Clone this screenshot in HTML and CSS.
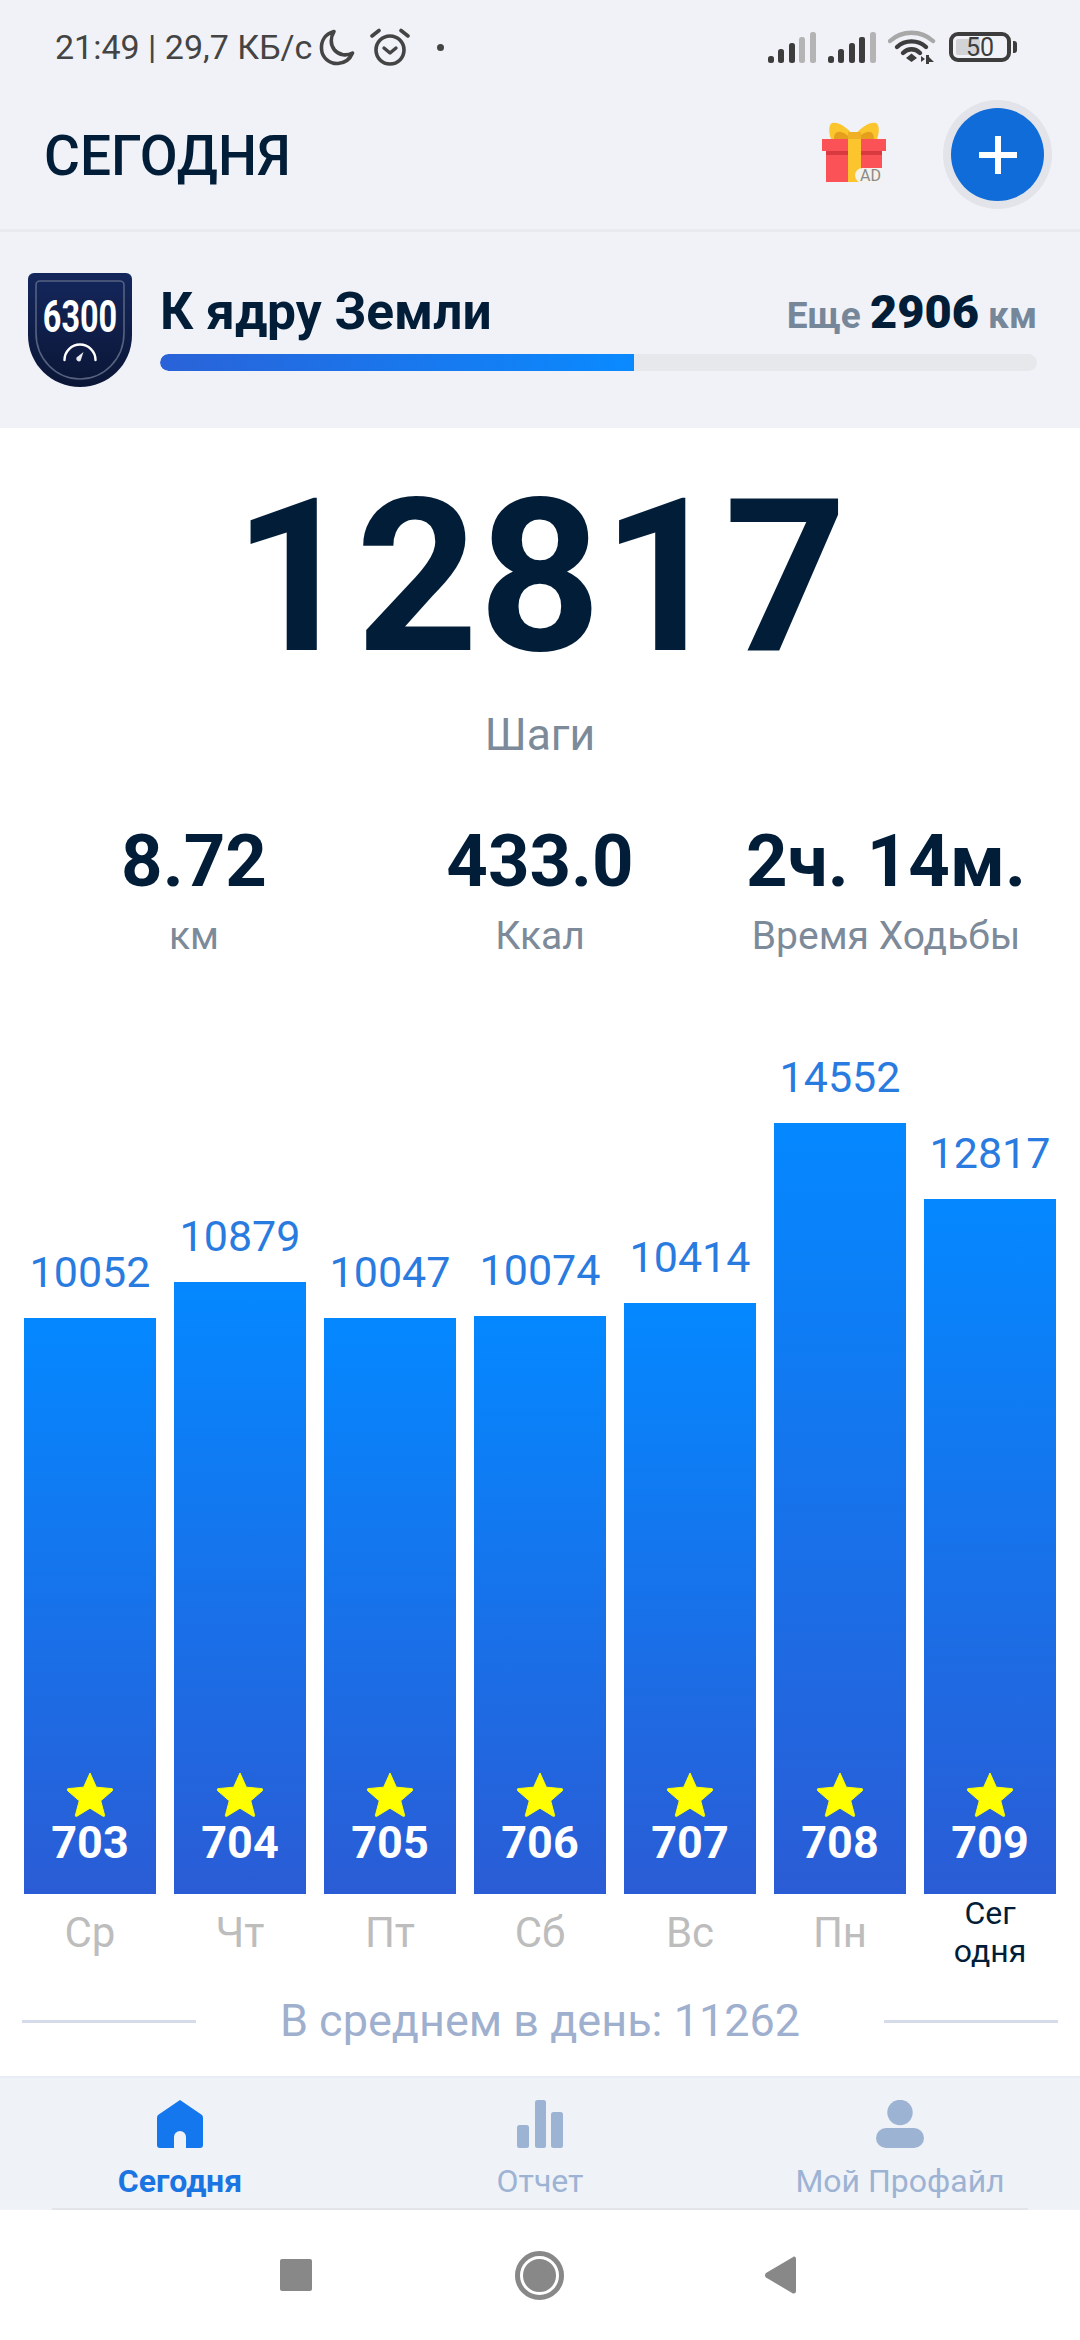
FILE: index.html
```html
<!DOCTYPE html>
<html lang="ru">
<head>
  <meta charset="UTF-8">
  <meta name="viewport" content="width=device-width, initial-scale=1.0">
  <title>Шаги</title>
  <link rel="stylesheet" href="styles.css">
</head>
<body>
  <div class="screen">
    <!-- Status bar -->
    <div class="status-bar">
      <div class="status-left">
        <span class="status-text">21:49 | 29,7 КБ/с</span>
        <svg class="icon-moon" width="36" height="37" viewBox="0 0 36 37"><path d="M15 2.5 C6 5 2 12 2.5 20 C3 29 11 35 19 34.5 C26 34 31 30 33.5 24 C28 27 20 26.5 15.5 21 C11 15.5 11.5 8 15 2.5 Z" fill="none" stroke="#444" stroke-width="3.6" stroke-linejoin="round"/></svg>
        <svg class="icon-alarm" width="40" height="38" viewBox="0 0 40 38"><circle cx="20" cy="22" r="14" fill="none" stroke="#444" stroke-width="3.6"/><path d="M14 20 L20 25 L26 20" fill="none" stroke="#444" stroke-width="3.4" stroke-linecap="round" stroke-linejoin="round"/><path d="M2 8 L9 2.5 M38 8 L31 2.5" stroke="#444" stroke-width="3.6" stroke-linecap="round"/></svg>
        <span class="status-dot"></span>
      </div>
      <div class="status-right">
        <svg class="icon-signal" width="48" height="31" viewBox="0 0 48 31">
          <rect x="0" y="24" width="6" height="7" rx="2.5" fill="#3d3d3d"/>
          <rect x="10" y="17" width="6" height="14" rx="2.5" fill="#3d3d3d"/>
          <rect x="21" y="11" width="6" height="20" rx="2.5" fill="#3d3d3d"/>
          <rect x="31" y="5" width="6" height="26" rx="2.5" fill="#b4b4b4"/>
          <rect x="42" y="0" width="6" height="31" rx="2.5" fill="#b4b4b4"/>
        </svg>
        <svg class="icon-signal" width="48" height="31" viewBox="0 0 48 31">
          <rect x="0" y="24" width="6" height="7" rx="2.5" fill="#3d3d3d"/>
          <rect x="10" y="17" width="6" height="14" rx="2.5" fill="#3d3d3d"/>
          <rect x="21" y="11" width="6" height="20" rx="2.5" fill="#3d3d3d"/>
          <rect x="31" y="5" width="6" height="26" rx="2" fill="#3d3d3d"/>
          <rect x="42" y="0" width="6" height="31" rx="2.5" fill="#b4b4b4"/>
        </svg>
        <svg class="icon-wifi" width="48" height="35" viewBox="0 0 48 35">
          <path d="M2 11 C14 0 33 0 45 11" fill="none" stroke="#a8a8a8" stroke-width="4.4" stroke-linecap="round"/>
          <path d="M9 17 C17 9.5 30 9.5 38 17" fill="none" stroke="#3d3d3d" stroke-width="4.4" stroke-linecap="round"/>
          <path d="M15 23 C20 18 27 18 32 23" fill="none" stroke="#3d3d3d" stroke-width="4.4" stroke-linecap="round"/>
          <path d="M18 28 L23.500 23.500 L29 28 L23.500 32 Z" fill="#3d3d3d"/>
          <path d="M33 32 L33 26 L37 29 Z M38 25 L38 34 L41 34 L41 25 Z M41 27 L46 32 L41 32 Z" fill="#3d3d3d"/>
        </svg>
        <div class="battery">
          <div class="battery-body">
            <span class="battery-level"></span>
            <span class="battery-text">50</span>
          </div>
          <span class="battery-tip"></span>
        </div>
      </div>
    </div>

    <!-- Header -->
    <header class="top-bar">
      <h1 class="page-title">СЕГОДНЯ</h1>
      <div class="top-actions">
        <div class="gift">
          <svg width="64" height="62" viewBox="0 0 64 62">
            <path d="M32 14 C26 6 16 -1 10 1 C6 3 7 12 9 17 L55 17 C57 12 58 3 54 1 C48 -1 38 6 32 14 Z" fill="#fbc52e"/>
            <path d="M12 17 C12 12 14 9 19 10 C23 11 26 13 28 17 Z M52 17 C52 12 50 9 45 10 C41 11 38 13 36 17 Z" fill="#e59f1c"/>
            <rect x="26" y="10" width="13" height="8" fill="#f0b024"/>
            <rect x="4" y="28" width="56" height="32" fill="#fb5257"/>
            <rect x="4" y="29" width="56" height="4" fill="#d93a40"/>
            <rect x="0" y="17" width="64" height="12" fill="#fb5257"/>
            <rect x="26" y="17" width="13" height="43" fill="#fcc42d"/>
          </svg>
          <span class="gift-ad">AD</span>
        </div>
        <button class="add-button">
          <svg width="40" height="40" viewBox="0 0 40 40"><path d="M20 1 V39 M1 20 H39" stroke="#fff" stroke-width="6"/></svg>
        </button>
      </div>
    </header>

    <!-- Distance goal -->
    <section class="goal">
      <div class="goal-badge">
        <svg width="104" height="114" viewBox="0 0 104 114">
          <defs>
            <linearGradient id="badgeFill" x1="0" y1="0" x2="0" y2="1">
              <stop offset="0" stop-color="#14275c"/>
              <stop offset="1" stop-color="#0b1636"/>
            </linearGradient>
          </defs>
          <path d="M6 0 H98 A6 6 0 0 1 104 6 V62 C104 92 80 114 52 114 C24 114 0 92 0 62 V6 A6 6 0 0 1 6 0 Z" fill="url(#badgeFill)"/>
          <path d="M12 8 H92 A4 4 0 0 1 96 12 V60 C96 86 76 106 52 106 C28 106 8 86 8 60 V12 A4 4 0 0 1 12 8 Z" fill="none" stroke="#55627f" stroke-width="1.6"/>
          <path d="M36.500 87 A15.500 15.500 0 0 1 67.500 87" fill="none" stroke="#fff" stroke-width="2.400" stroke-linecap="round"/>
          <path d="M55.500 79 L48.500 84.500 A2.800 2.800 0 0 0 52.500 88 Z" fill="#e8eaf0"/>
        </svg>
        <span class="badge-text">6300</span>
      </div>
      <div class="goal-body">
        <div class="goal-row">
          <span class="goal-title">К ядру Земли</span>
          <span class="goal-left">Еще <b>2906</b> км</span>
        </div>
        <div class="goal-track"><div class="goal-fill" style="width: 54%"></div></div>
      </div>
    </section>

    <!-- Today -->
    <main class="today">
      <div class="steps-count">12817</div>
      <div class="steps-label">Шаги</div>

      <div class="stats">
        <div class="stat"><div class="stat-value">8.72</div><div class="stat-label">км</div></div>
        <div class="stat"><div class="stat-value">433.0</div><div class="stat-label">Ккал</div></div>
        <div class="stat"><div class="stat-value">2ч. 14м.</div><div class="stat-label">Время Ходьбы</div></div>
      </div>

      <div class="chart">
        <div class="chart-col"><div class="chart-value">10052</div><div class="bar" style="height: 576px"><svg class="star" width="48" height="45" viewBox="0 0 48 46"><use href="#star"/></svg><span class="bar-num">703</span></div></div>
        <div class="chart-col"><div class="chart-value">10879</div><div class="bar" style="height: 612px"><svg class="star" width="48" height="45" viewBox="0 0 48 46"><use href="#star"/></svg><span class="bar-num">704</span></div></div>
        <div class="chart-col"><div class="chart-value">10047</div><div class="bar" style="height: 576px"><svg class="star" width="48" height="45" viewBox="0 0 48 46"><use href="#star"/></svg><span class="bar-num">705</span></div></div>
        <div class="chart-col"><div class="chart-value">10074</div><div class="bar" style="height: 578px"><svg class="star" width="48" height="45" viewBox="0 0 48 46"><use href="#star"/></svg><span class="bar-num">706</span></div></div>
        <div class="chart-col"><div class="chart-value">10414</div><div class="bar" style="height: 591px"><svg class="star" width="48" height="45" viewBox="0 0 48 46"><use href="#star"/></svg><span class="bar-num">707</span></div></div>
        <div class="chart-col"><div class="chart-value">14552</div><div class="bar" style="height: 771px"><svg class="star" width="48" height="45" viewBox="0 0 48 46"><use href="#star"/></svg><span class="bar-num">708</span></div></div>
        <div class="chart-col"><div class="chart-value">12817</div><div class="bar" style="height: 695px"><svg class="star" width="48" height="45" viewBox="0 0 48 46"><use href="#star"/></svg><span class="bar-num">709</span></div></div>
      </div>

      <div class="days">
        <span class="day">Ср</span>
        <span class="day">Чт</span>
        <span class="day">Пт</span>
        <span class="day">Сб</span>
        <span class="day">Вс</span>
        <span class="day">Пн</span>
        <span class="day day-today">Сег<br>одня</span>
      </div>

      <div class="average">
        <span class="average-line"></span>
        <span class="average-text">В среднем в день: 11262</span>
        <span class="average-line"></span>
      </div>
    </main>

    <!-- Tab bar -->
    <nav class="tabs">
      <div class="tab tab-active">
        <svg width="46" height="48" viewBox="0 0 46 48"><path d="M23 0 L45 15 Q46 16 46 18 V45 Q46 48 43 48 H29 V37 A6 6 0 0 0 17 37 V48 H3 Q0 48 0 45 V18 Q0 16 1 15 Z" fill="#1577ee"/></svg>
        <span>Сегодня</span>
      </div>
      <div class="tab">
        <svg width="46" height="48" viewBox="0 0 46 48"><rect x="0" y="25" width="12" height="23" rx="2.500" fill="#9db3d4"/><rect x="18" y="0" width="11" height="48" rx="2.500" fill="#9db3d4"/><rect x="34" y="12" width="12" height="36" rx="2.500" fill="#9db3d4"/></svg>
        <span>Отчет</span>
      </div>
      <div class="tab">
        <svg width="48" height="48" viewBox="0 0 48 48"><circle cx="24" cy="12.500" r="12.700" fill="#9db3d4"/><rect x="0" y="28" width="48" height="20" rx="10" fill="#9db3d4"/></svg>
        <span>Мой Профайл</span>
      </div>
    </nav>

    <!-- System navigation -->
    <div class="system-nav">
      <span class="nav-square"></span>
      <span class="nav-circle"></span>
      <svg width="33" height="38" viewBox="0 0 33 38"><path d="M30 0.500 Q32 0 32 3 V35 Q32 38 29 37.500 L2 21.500 Q0 19 2 17 Z" fill="#888"/></svg>
    </div>
  </div>

  <!-- Shared star shape -->
  <svg class="sprite" width="0" height="0">
    <symbol id="star" viewBox="0 0 48 46">
      <path d="M24 1 L30.500 15.500 L46.500 17 Q48 17.500 47 19 L35 29.500 L39 44.500 Q39 46 37 45 L24 37 L11 45 Q9 46 9 44.500 L13 29.500 L1 19 Q0 17.500 1.500 17 L17.500 15.500 Z" fill="#ffff00" stroke="#ffff00" stroke-width="1" stroke-linejoin="round"/>
    </symbol>
  </svg>
</body>
</html>
```
FILE: styles.css
```css
/* Global Styles */
body {
  margin: 0;
  font-family: 'Roboto', 'Noto Sans', sans-serif;
  background-color: #ffffff;
  color: #021d38;
}

.screen {
  width: 1080px;
  height: 2340px;
  display: flex;
  flex-direction: column;
  overflow: hidden;
}

.sprite {
  position: absolute;
}

/* Status Bar */
.status-bar {
  height: 80px;
  padding: 14px 63px 0 55px;
  box-sizing: border-box;
  background-color: #f0f2f7;
  display: flex;
  justify-content: space-between;
  align-items: center;
}

.status-left,
.status-right {
  display: flex;
  align-items: center;
}

.status-text {
  font-size: 34px;
  color: #444;
}

.icon-moon {
  margin-left: 7px;
}

.icon-alarm {
  margin-left: 15px;
}

.status-dot {
  width: 7px;
  height: 7px;
  margin-left: 27px;
  border-radius: 50%;
  background-color: #444;
}

.icon-signal {
  margin-right: 12px;
}

.icon-wifi {
  margin-right: 13px;
}

.battery {
  display: flex;
  align-items: center;
}

.battery-body {
  position: relative;
  width: 62px;
  height: 30px;
  box-sizing: border-box;
  border: 4px solid #3d3d3d;
  border-radius: 9px;
  display: flex;
  align-items: center;
  justify-content: center;
}

.battery-level {
  position: absolute;
  left: 3px;
  top: 3px;
  bottom: 3px;
  width: 24px;
  border-radius: 2px;
  background-color: #d2d3d6;
}

.battery-text {
  position: relative;
  font-size: 25px;
  color: #3d3d3d;
}

.battery-tip {
  width: 4px;
  height: 12px;
  margin-left: 2px;
  border-radius: 0 3px 3px 0;
  background-color: #3d3d3d;
}

/* Header */
.top-bar {
  height: 152px;
  padding: 0 36px 0 44px;
  box-sizing: border-box;
  background-color: #f0f2f7;
  border-bottom: 3px solid #e8eaef;
  display: flex;
  justify-content: space-between;
  align-items: center;
}

.page-title {
  margin: 3px 0 0;
  font-size: 55px;
  font-weight: 500;
  color: #021d38;
}

.top-actions {
  display: flex;
  align-items: center;
  gap: 65px;
}

.gift {
  position: relative;
  width: 64px;
  height: 62px;
  margin-top: -4px;
}

.gift svg {
  display: block;
}

.gift-ad {
  position: absolute;
  right: 4px;
  bottom: 1px;
  padding: 0 1px 0 5px;
  border-radius: 9px 0 0 9px;
  background-color: #f4f2ec;
  font-size: 16px;
  line-height: 15px;
  color: #8a8a8a;
}

.add-button {
  width: 93px;
  height: 93px;
  padding: 0;
  border: none;
  border-radius: 50%;
  background-color: #0f6cd8;
  box-shadow: 0 0 0 8px #e2e4e9;
  display: flex;
  align-items: center;
  justify-content: center;
}

/* Distance Goal */
.goal {
  height: 196px;
  padding: 41px 43px 0 28px;
  box-sizing: border-box;
  background-color: #f0f2f7;
  display: flex;
  align-items: flex-start;
  gap: 28px;
}

.goal-badge {
  position: relative;
  width: 104px;
  height: 114px;
  flex-shrink: 0;
}

.goal-badge svg {
  display: block;
}

/* narrow digits on the shield */
.badge-text {
  position: absolute;
  top: 28px;
  left: 0;
  width: 104px;
  font-size: 45px;
  line-height: 32px;
  font-weight: 700;
  text-align: center;
  color: #ffffff;
  transform: scaleX(0.72);
}

.goal-body {
  flex: 1;
}

.goal-row {
  height: 81px;
  padding-bottom: 5px;
  box-sizing: border-box;
  display: flex;
  justify-content: space-between;
  align-items: center;
}

.goal-title {
  font-size: 51.5px;
  font-weight: 700;
  color: #021d38;
}

.goal-left {
  font-size: 37px;
  font-weight: 700;
  color: #76879a;
}

.goal-left b {
  font-size: 47px;
  color: #021d38;
}

.goal-track {
  height: 17px;
  border-radius: 9px;
  background-color: #e6e8ec;
  overflow: hidden;
}

.goal-fill {
  height: 100%;
  border-radius: 9px 0 0 9px;
  background: linear-gradient(to right, #2a62d8, #0a8aff);
}

/* Today */
.today {
  flex: 1;
  display: flex;
  flex-direction: column;
}

.steps-count {
  margin-top: 29px;
  font-size: 214px;
  line-height: 240px;
  font-weight: 700;
  text-align: center;
  color: #021d38;
}

.steps-label {
  margin-top: 13px;
  font-size: 44.500px;
  line-height: 50px;
  text-align: center;
  color: #7c8a99;
}

.stats {
  margin-top: 62px;
  padding: 0 21px;
  display: grid;
  grid-template-columns: repeat(3, 1fr);
  text-align: center;
}

.stat-value {
  font-size: 72.500px;
  line-height: 80px;
  font-weight: 700;
  color: #021d38;
}

.stat-label {
  margin-top: 9px;
  font-size: 39px;
  line-height: 50px;
  color: #7c8a99;
}

/* Bar Chart */
.chart {
  height: 933px;
  padding: 0 24px;
  display: flex;
  align-items: flex-end;
  gap: 18px;
}

.chart-col {
  width: 132px;
  text-align: center;
}

.chart-value {
  margin-bottom: 21px;
  font-size: 43px;
  line-height: 50px;
  color: #2a7bdf;
}

.bar {
  padding-bottom: 25px;
  box-sizing: border-box;
  background: linear-gradient(to bottom, #0488ff, #2a5cd5);
  display: flex;
  flex-direction: column;
  justify-content: flex-end;
  align-items: center;
}

.bar-num {
  font-size: 45px;
  line-height: 52px;
  font-weight: 700;
  color: #ffffff;
}

.days {
  height: 78px;
  padding: 0 24px;
  display: flex;
  gap: 18px;
}

.day {
  width: 132px;
  padding-top: 14px;
  box-sizing: border-box;
  font-size: 42px;
  line-height: 50px;
  text-align: center;
  color: #bdbdbd;
}

.day-today {
  padding-top: 0;
  font-size: 32px;
  line-height: 38px;
  color: #021d38;
}

.average {
  margin-top: 21px;
  padding: 0 22px;
  display: flex;
  justify-content: space-between;
  align-items: center;
}

.average-line {
  width: 174px;
  height: 3px;
  background-color: #d5dbe9;
}

.average-text {
  font-size: 45px;
  line-height: 56px;
  color: #9fb0cf;
}

/* Tab Bar */
.tabs {
  height: 134px;
  box-sizing: border-box;
  border-top: 2px solid #e8ecf5;
  background-color: #eff2f6;
  display: grid;
  grid-template-columns: repeat(3, 1fr);
  position: relative;
}

.tabs::after {
  content: "";
  position: absolute;
  left: 52px;
  right: 52px;
  bottom: 0;
  height: 2px;
  background-color: #e2e4e7;
}

.tab {
  padding-top: 22px;
  display: flex;
  flex-direction: column;
  align-items: center;
  font-size: 32px;
  color: #9db3d4;
}

.tab svg {
  margin-bottom: 14px;
}

.tab-active {
  font-weight: 700;
  color: #1a75e2;
}

/* System Navigation */
.system-nav {
  flex: 0 0 130px;
  padding-left: 280px;
  box-sizing: border-box;
  background-color: #ffffff;
  display: flex;
  align-items: center;
}

.nav-square {
  width: 32px;
  height: 32px;
  margin-right: 203px;
  border-radius: 2px;
  background-color: #888;
}

.nav-circle {
  width: 33px;
  height: 33px;
  margin: 0 205px 0 5px;
  border: 3px solid #fff;
  outline: 5px solid #888;
  border-radius: 50%;
  background-color: #888;
}
```
